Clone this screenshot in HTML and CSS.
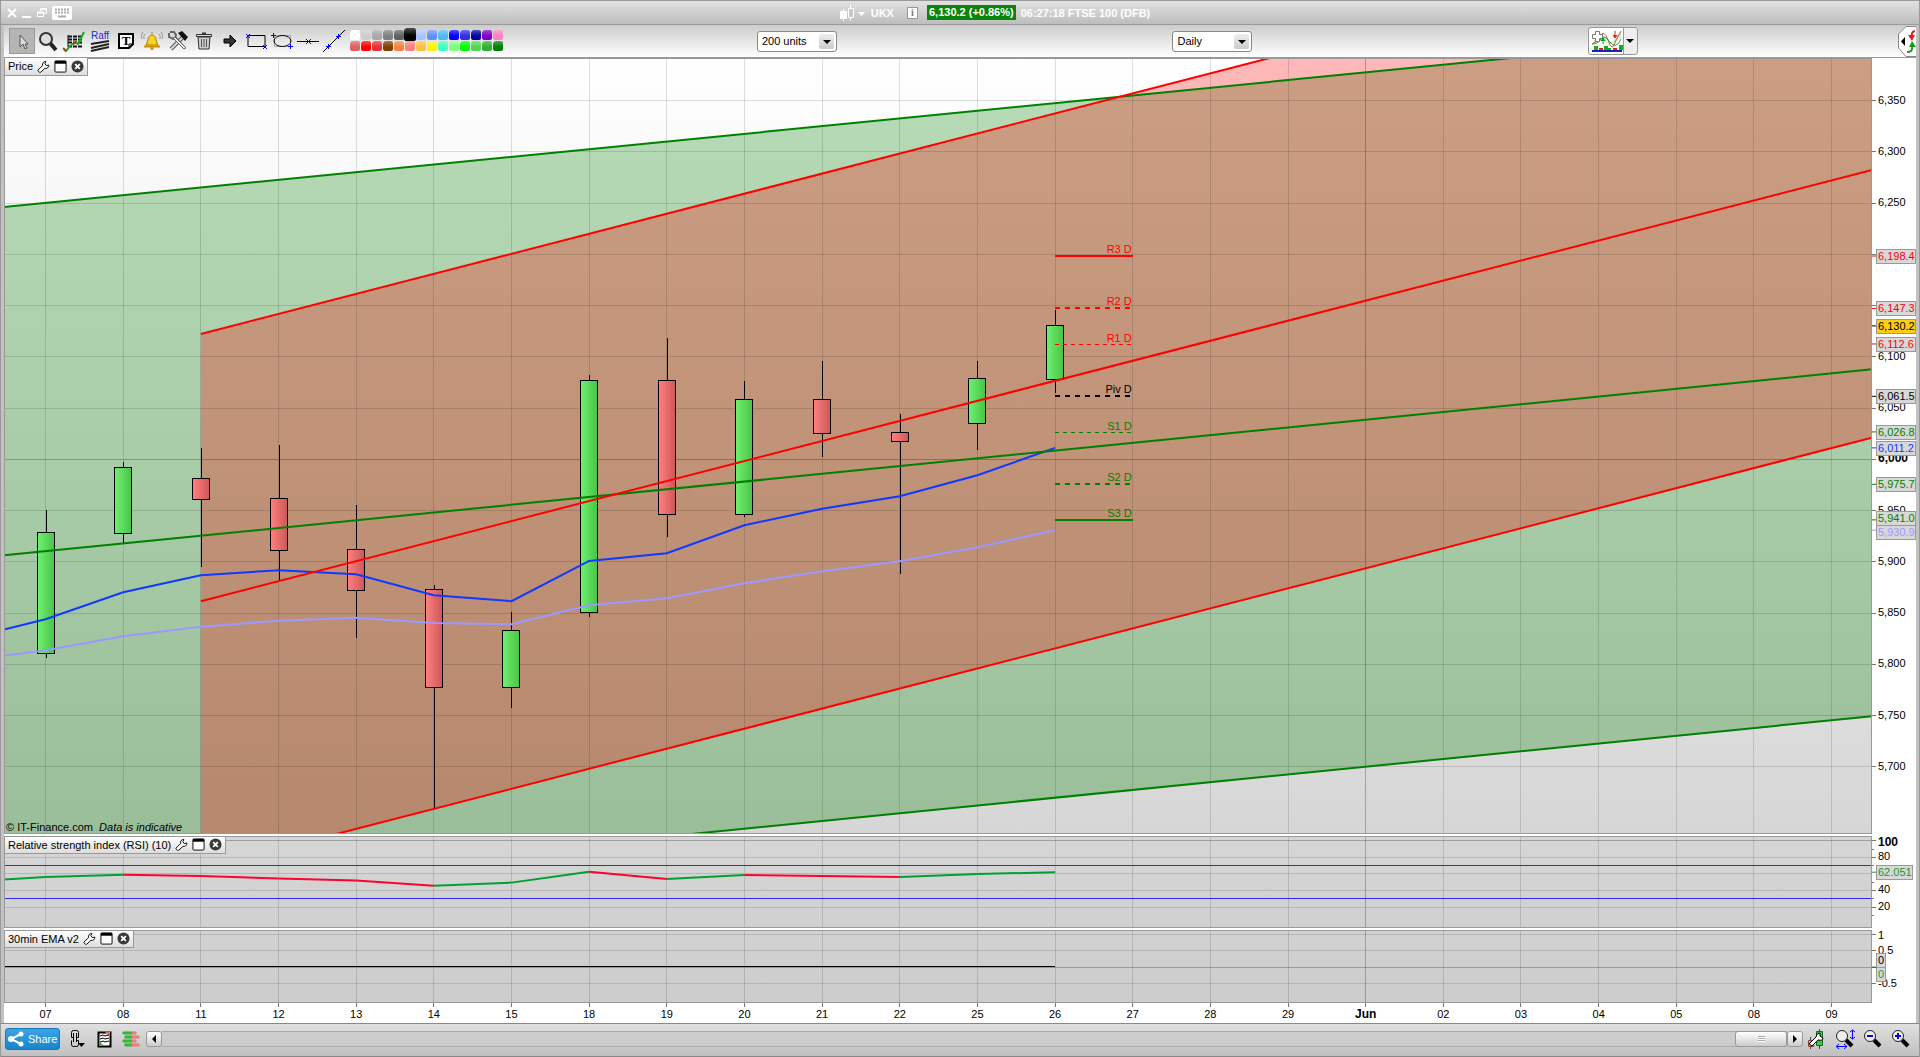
FILE: index.html
```
<!DOCTYPE html>
<html lang="en">
<head>
    <meta charset="UTF-8">
    <meta name="viewport" content="width=device-width, initial-scale=1.0">
    <title>UKX - FTSE 100 (DFB)</title>
    <link rel="stylesheet" href="styles.css">
</head>
<body>
    <svg class="defs" aria-hidden="true">
        <symbol id="wrench" viewBox="0 0 14 14">
            <path d="M1 11l5-5c-.5-2.500 1-4.500 3.500-4.500l-1 2.500 1.500 2 2.800-.5c0 2.500-2 4-4.300 3.500L4 13.200c-1.500.5-3-1-3-2.200z" fill="#fff" stroke="#000"/>
        </symbol>
        <symbol id="restore" viewBox="0 0 14 14">
            <rect x="1" y="1" width="12" height="12" rx="1" fill="#fff" stroke="#000"/>
            <path d="M1 1h12v3H1z"/>
        </symbol>
        <symbol id="close" viewBox="0 0 14 14">
            <circle cx="7" cy="7" r="6.500" fill="#3a3a3a"/>
            <path d="M4.500 4.500l5 5m0-5l-5 5" stroke="#fff" stroke-width="2"/>
        </symbol>
        <symbol id="lens" viewBox="0 0 20 20">
            <path d="M11 11l6 6" stroke="#000" stroke-width="4"/>
            <circle cx="7" cy="7" r="5.500" fill="#eee" stroke="#222"/>
        </symbol>
    </svg>

    <div class="window">
        <header class="titlebar">
            <div class="win-buttons">
                <button aria-label="Close"><svg width="10" height="10"><path d="M1 1l8 8m0-8L1 9" stroke="#fff" stroke-width="2"/></svg></button>
                <button aria-label="Minimise"><svg width="10" height="10"><path d="M0 9h9" stroke="#fff" stroke-width="2"/></svg></button>
                <button aria-label="Restore"><svg width="10" height="10"><path d="M3.500 3V1h6v4.500H7M.5 4.500h6v4h-6z" fill="none" stroke="#fff"/><path d="M3 1h7M0 4.500h7" stroke="#fff" stroke-width="2"/></svg></button>
                <button aria-label="Keyboard"><svg width="20" height="14"><rect width="20" height="14" rx="2" fill="#fff"/><path d="M3 3.500h14M3 6.500h14" stroke="#aaa" stroke-width="2" stroke-dasharray="2 1"/><path d="M6 10.500h8" stroke="#aaa" stroke-width="2"/></svg></button>
            </div>
            <div class="instrument">
                <svg width="26" height="16"><path d="M3.500 4v12M10.500 0v16" stroke="#fff"/><path d="M0 6h7v8H0z" fill="#fff"/><path d="M8.500 3.500h5v9h-5z" fill="#c8c8c8" stroke="#fff"/><path d="M18 7h7l-3.500 4z" fill="#fff"/></svg>
                <span>UKX</span>
                <button class="info" aria-label="Information">i</button>
                <span class="quote">6,130.2 (+0.86%)</span>
                <span>06:27:18 FTSE 100 (DFB)</span>
            </div>
        </header>

        <div class="toolbar">
            <div class="tools">
                <button class="active" aria-label="Pointer"><svg width="24" height="24"><path d="M10 6v12l3-3 2 5 2-1-2-4h3z" fill="#ddd" stroke="#555"/></svg></button>
                <button aria-label="Zoom"><svg width="24" height="24"><path d="M14 14l6 7" stroke="#222" stroke-width="4"/><circle cx="10" cy="10" r="6" fill="#ddd" stroke="#333" stroke-width="2"/></svg></button>
                <button aria-label="Indicators"><svg width="24" height="24"><path d="M6 7.500h14M6 10.500h14M6 13.500h14M6 17.500h14" stroke="#111" stroke-width="2" stroke-dasharray="4 1"/><path d="M6 6v12" stroke="#111"/><path d="M1 19l3 3 4-5 6-4 2 2 6-12" stroke="#12b020" stroke-width="2" fill="none"/><path d="M2 20l2 2M11 15l3-2" stroke="#e02020" stroke-width="2"/></svg></button>
                <button class="raff" aria-label="Raff channel"><span>Raff</span><svg width="20" height="12"><path d="M1 4l18-3M1 8l18-4M1 11l18-4" stroke="#222" stroke-width="2"/></svg></button>
                <button aria-label="Text"><svg width="24" height="24"><path d="M5 5h14v10l-4 4H5z" fill="#fff" stroke="#000" stroke-width="2"/><path d="M15 19v-4h4" fill="none" stroke="#000"/><text class="glyph" x="12" y="16">T</text></svg></button>
                <button aria-label="Alerts"><svg width="24" height="24"><path d="M12 3v2M6 16c2-2 1-9 6-10 5 1 4 8 6 10z" fill="#ffd21c" stroke="#a87800"/><path d="M4 17.500h16" stroke="#c89000" stroke-width="2"/><circle cx="12" cy="19.500" r="1.500" fill="#d09000"/><path d="M5 5q-2 2-1 5M3 3q-3 3-1 7M19 5q2 2 1 5M21 3q3 3 1 7" fill="none" stroke="#999"/></svg></button>
                <button aria-label="Settings"><svg width="24" height="24"><path d="M5 20L17 8" stroke="#555" stroke-width="4"/><path d="M5 20L17 8" stroke="#ddd" stroke-width="2"/><path d="M12 4l4-2 6 6-3 4z" fill="#111"/><path d="M3 4v4l4 2 3-1 9 10M4 3h4l2 3-1 4" fill="none" stroke="#666" stroke-width="2"/><path d="M7 9l11 11 2-1L9 8z" fill="#eee" stroke="#666"/></svg></button>
                <button aria-label="Delete"><svg width="24" height="24"><path d="M6 8h12l-1 12H7z" fill="#ccc" stroke="#333"/><path d="M9.500 10v8M12 10v8M14.500 10v8" stroke="#555"/><path d="M4.500 5.500h15v2h-15z" fill="#ddd" stroke="#333"/><path d="M10 4.500h4" stroke="#333" stroke-width="2"/></svg></button>
                <button aria-label="Arrow"><svg width="24" height="24"><path d="M6 10h6V6l6 6-6 6v-4H6z" fill="#333" stroke="#000"/></svg></button>
                <button aria-label="Rectangle"><svg width="24" height="24"><path d="M4 6.500h17v11H4z" fill="none" stroke="#000"/><path class="anchor" d="M2 5l4 4m0-4L2 9M19 16l4 4m0-4l-4 4"/></svg></button>
                <button aria-label="Ellipse"><svg width="24" height="24"><path d="M4.500 6.500h16v11h-16z" fill="none" stroke="#aaa"/><ellipse cx="12.500" cy="12" rx="8.500" ry="5.500" fill="none" stroke="#000"/><path class="anchor" d="M1 6.500h5M3.500 4v5M18 17.500h5M20.500 15v5"/></svg></button>
                <button aria-label="Horizontal line"><svg width="24" height="24"><path d="M1 12.500h22" stroke="#000"/><path class="anchor" d="M10 10l5 5m0-5l-5 5"/></svg></button>
                <button aria-label="Line"><svg width="24" height="24"><path d="M1 23L23 1" stroke="#000"/><path class="anchor" d="M4 17.500h5M6.500 15v5M14 7.500h5M16.500 5v5"/></svg></button>
                <div class="palette" id="palette"></div>
            </div>
            <div><label class="dropdown"><select aria-label="Units"><option>200 units</option></select></label></div>
            <div><label class="dropdown"><select aria-label="Timeframe"><option>Daily</option></select></label></div>
            <div class="toolbar-end">
                <button class="indicators" aria-label="Add indicator">
                    <svg width="32" height="22"><path d="M1 14l7-3 4-8 6 13 8-10 4-5v6l-6 6-10-2-5-7-4 3z" fill="#c8ecc8"/><path d="M1 14q4-1 8-8t8 4 6 5 7-14" fill="none" stroke="#e05050"/><path d="M1 14q6 0 9-5t9 3 11-3" fill="none" stroke="#30a030"/><path d="M4.500 1.500h4v3h3v4h-3v3h-4v-3h-3v-4h3z" fill="#fff" stroke="#777"/><path d="M24 1v4m-2 0l2 3 2-3" fill="#e02020" stroke="#e02020"/><path d="M12 14v-4m-2 1l2-3 2 3" fill="#10a010" stroke="#10a010"/><path d="M3 16h4v4H3zM13 16h4v4h-4zM17 18h3v2h-3zM28 15h4v5h-4z" fill="#10b010"/><path d="M8 18h4v2H8zM22 18h4v2h-4z" fill="#e02020"/><path d="M1 21h30" stroke="#2020c0" stroke-width="2"/></svg>
                    <span class="caret"></span>
                </button>
                <button class="side-tab" aria-label="Open panel"><svg width="18" height="31"><path d="M18 .5H8L.5 8v14L8 30.500h10" fill="#fff" stroke="#888"/><path d="M7 11v9l-4-4.500z"/><path d="M17 5q-4 1-3 5" stroke="#e02020" stroke-width="2" fill="none"/><path d="M10 9h7l-3 6z" fill="#e02020"/><path d="M9 26q6 0 5-5" stroke="#10a010" stroke-width="2" fill="none"/><path d="M11 21h7l-4-6z" fill="#10a010"/></svg></button>
            </div>
        </div>

        <main class="charts">
            <section class="panel price">
                <svg class="plot" id="price"></svg>
                <div class="panel-title">Price
                    <button aria-label="Configure"><svg><use href="#wrench"/></svg></button>
                    <button aria-label="Expand"><svg><use href="#restore"/></svg></button>
                    <button aria-label="Close"><svg><use href="#close"/></svg></button>
                </div>
                <div class="credit">© IT-Finance.com&nbsp; <em>Data is indicative</em></div>
            </section>
            <section class="panel rsi">
                <svg class="plot" id="rsi"></svg>
                <div class="panel-title">Relative strength index (RSI) (10)
                    <button aria-label="Configure"><svg><use href="#wrench"/></svg></button>
                    <button aria-label="Expand"><svg><use href="#restore"/></svg></button>
                    <button aria-label="Close"><svg><use href="#close"/></svg></button>
                </div>
            </section>
            <section class="panel ema">
                <svg class="plot" id="ema"></svg>
                <div class="panel-title">30min EMA v2
                    <button aria-label="Configure"><svg><use href="#wrench"/></svg></button>
                    <button aria-label="Expand"><svg><use href="#restore"/></svg></button>
                    <button aria-label="Close"><svg><use href="#close"/></svg></button>
                </div>
            </section>
            <svg class="dates" id="dates"></svg>
        </main>

        <footer class="bottombar">
            <button class="share"><svg width="16" height="16"><path d="M13 3L3 8l10 5" fill="none" stroke="#fff" stroke-width="2"/><circle cx="13" cy="3" r="2.500" fill="#fff"/><circle cx="3" cy="8" r="3" fill="#fff"/><circle cx="13" cy="13" r="2.500" fill="#fff"/></svg>Share</button>
            <div class="bottom-tools">
                <button aria-label="Link"><svg width="18" height="20"><path d="M5.500 8.500h-2v-5q0-2 2-2h3q2 0 2 2v5h-2M3.500 11.500v4q0 2 2 2h3q2 0 2-2v-4h-2M5.500 4v9M8.500 4v9" fill="none" stroke="#000"/><path d="M10 14h7l-3.500 4z"/></svg></button>
                <button aria-label="Orders"><svg width="18" height="20"><path d="M3.500 3.500h12v14h-12z" fill="#fff" stroke="#000" stroke-width="2"/><path d="M10 3h5v5z" fill="#e66"/><path d="M4 12v5h5z" fill="#3b3"/><path d="M5 7l3-1 2 1 4-1M5 10l3-1 2 1 4-1M5 13l3-1 2 1 4-1" fill="none" stroke="#000"/></svg></button>
                <button aria-label="Depth"><svg width="18" height="20"><path d="M1 3h9v2H1zM3 7h7v2H3zM1 11h9v2H1zM3 15h7v2H3z" fill="#3c3" stroke="#3a3"/><path d="M10 3h4v2h-4zM10 7h7v2h-7zM10 11h4v2h-4zM10 15h7v2h-7z" fill="#f88" stroke="#d77"/></svg></button>
            </div>
            <div class="scroller">
                <button class="step" aria-label="Scroll left"><svg width="6" height="8"><path d="M5 0v8L1 4z"/></svg></button>
                <div class="track"><div class="thumb"><span></span></div></div>
                <button class="step" aria-label="Scroll right"><svg width="6" height="8"><path d="M1 0v8l4-4z"/></svg></button>
            </div>
            <div class="zoom-tools">
                <button aria-label="Chart settings"><svg width="20" height="20"><path d="M3.500 8v12M12.500 0v20" stroke="#444"/><path d="M1.500 11.500h5v6h-5z" fill="#e99" stroke="#844"/><path d="M9.500 2.500h6v14h-6z" fill="#3c4" stroke="#262"/><path d="M2 15l7-7q0-4 4-4v3l3 2q0 3-5 2l-6 6z" fill="#fff" stroke="#000"/></svg></button>
                <button aria-label="Fit"><svg width="20" height="20"><use href="#lens" width="20" height="20"/><path d="M2 17.500h9M4 15l-3 2.500L4 20M9 15l3 2.500L9 20M17.500 1v9M15 3l2.500-2L20 3M15 8l2.500 2L20 8" fill="none" stroke="#00f"/></svg></button>
                <button aria-label="Zoom out"><svg width="20" height="20"><use href="#lens" width="20" height="20"/><path d="M4 7h6" stroke="#00f" stroke-width="2"/></svg></button>
                <button aria-label="Zoom in"><svg width="20" height="20"><use href="#lens" width="20" height="20"/><path d="M4 7h6M7 4v6" stroke="#00f" stroke-width="2"/></svg></button>
            </div>
        </footer>
    </div>

    <script src="chart.js"></script>
</body>
</html>
```
FILE: styles.css
```
* {
    box-sizing: border-box;
}

body {
    margin: 0;
    font-family: "Liberation Sans", Arial, sans-serif;
    font-size: 11px;
    color: #000;
}

button {
    padding: 0;
    border: none;
    background: none;
    font: inherit;
    cursor: pointer;
}

button svg {
    display: block;
}

.defs {
    position: absolute;
    width: 0;
    height: 0;
}

.window {
    display: flex;
    flex-direction: column;
    height: 100vh;
    min-height: 480px;
    padding: 0 3px;
    border: solid #999;
    border-width: 0 1px;
    background: #c2c2c2;
    overflow: hidden;
}

/* Title bar */
.titlebar {
    display: flex;
    align-items: center;
    height: 25px;
    margin: 0 -3px;
    border-top: 1px solid #999;
    border-bottom: 1px solid #999;
    background: linear-gradient(#e2e2e2, #bdbdbd);
    color: #fff;
    font-weight: bold;
}

.win-buttons {
    display: flex;
    align-items: center;
    gap: 5px;
    flex: 1;
    padding-left: 6px;
}

.instrument {
    display: flex;
    align-items: center;
    gap: 5px;
    margin-left: 64px;
}

.titlebar::after {
    content: "";
    flex: 1;
}

.info {
    width: 11px;
    height: 12px;
    margin: 0 4px 0 8px;
    border: 1px solid #999;
    background: #fff;
    color: #777;
    font: bold 10px/10px "Liberation Serif", serif;
}

.quote {
    padding: 0 2px;
    background: #0a850a;
    line-height: 15px;
    white-space: nowrap;
}

/* Toolbar */
.toolbar {
    display: grid;
    grid-template-columns: 9fr 5fr 5fr 328px;
    align-items: center;
    height: 33px;
    padding-left: 5px;
    border-bottom: 1px solid #999;
    background: linear-gradient(#ccc, #fff);
}

.tools {
    display: flex;
    align-items: center;
}

.tools button {
    flex: none;
    width: 26px;
    height: 26px;
}

.tools button svg {
    margin: auto;
}

.tools .active {
    border: 1px solid #999;
    background: #b5b5b5;
}

.raff {
    color: #1030e0;
    font-size: 10px;
    line-height: 9px;
}

.raff span {
    display: block;
}

.glyph {
    font: bold 13px "Liberation Serif", serif;
    text-anchor: middle;
}

.anchor {
    fill: none;
    stroke: #00f;
}

.palette {
    display: grid;
    grid-template-columns: repeat(14, 11px);
    margin-left: 3px;
}

.palette i {
    height: 11px;
    border: solid transparent;
    border-width: 0 1px 1px 0;
    border-radius: 3px;
    background: linear-gradient(rgba(255, 255, 255, .3), rgba(255, 255, 255, 0) 60%) padding-box, var(--swatch) padding-box;
}

.palette .picked {
    margin: -2px -1px -1px;
    height: 14px;
    z-index: 1;
}

.dropdown {
    position: relative;
    display: inline-block;
}

.dropdown select {
    width: 80px;
    height: 21px;
    padding: 0 4px;
    appearance: none;
    border: 1px solid #888;
    border-radius: 3px;
    background: #fff;
    color: #000;
    font: 11px "Liberation Sans", Arial, sans-serif;
}

.dropdown::before {
    content: "";
    position: absolute;
    top: 3px;
    right: 3px;
    width: 15px;
    height: 15px;
    border-radius: 2px;
    background: linear-gradient(#eee, #ccc);
    pointer-events: none;
}

.dropdown::after,
.caret {
    border: 4px solid transparent;
    border-top: 4px solid #000;
    border-bottom: none;
}

.dropdown::after {
    content: "";
    position: absolute;
    top: 9px;
    right: 6px;
    pointer-events: none;
}

.toolbar-end {
    display: flex;
    justify-content: space-between;
    align-items: center;
}

.indicators {
    display: flex;
    align-items: center;
    width: 50px;
    height: 28px;
    padding-left: 2px;
    border: 1px solid #999;
    border-radius: 3px;
    background: linear-gradient(90deg, #fff 34px, #999 34px, #999 35px, #eee 35px);
}

.caret {
    margin-left: 3px;
}

/* Chart panels */
.charts {
    flex: 1;
    min-height: 0;
    display: flex;
    flex-direction: column;
    gap: 2px;
    background: #fff;
}

.panel {
    position: relative;
    flex: none;
}

.price {
    flex: 1;
    min-height: 0;
}

.rsi {
    height: 92px;
}

.ema {
    height: 73px;
}

.plot {
    position: absolute;
    width: 100%;
    height: 100%;
}

.panel-title {
    position: absolute;
    top: 0;
    left: 0;
    display: flex;
    align-items: center;
    gap: 4px;
    height: 18px;
    padding: 0 3px 1px;
    border: 1px solid #999;
    background: linear-gradient(#fff, #ddd);
}

.price .panel-title {
    border-top: none;
}

.panel-title svg {
    width: 13px;
    height: 13px;
}

.credit {
    position: absolute;
    left: 2px;
    bottom: 1px;
}

.dates {
    flex: none;
    width: 100%;
    height: 20px;
    margin-top: -2px;
}

.frame {
    fill: none;
    stroke: #999;
}

.grid line {
    stroke: rgba(0, 0, 0, .13);
}

.grid .major {
    stroke: rgba(0, 0, 0, .26);
}

.frame,
.grid,
.ticks,
.wick,
.body,
.flat {
    shape-rendering: crispEdges;
}

.ticks line {
    stroke: #777;
}

.plot text,
.dates text {
    font-size: 11px;
}

.dates text {
    text-anchor: middle;
}

.plot .strong,
.dates .strong {
    font-size: 12px;
    font-weight: bold;
}

.wick,
.body {
    stroke: #000;
}

.trend {
    fill: none;
    stroke-width: 2;
}

.tag {
    stroke: #999;
}

/* Bottom bar */
.bottombar {
    display: flex;
    align-items: center;
    height: 34px;
    margin: 0 -3px;
    padding: 0 8px 2px 4px;
    border-top: 1px solid #888;
    border-bottom: 1px solid #888;
    background: linear-gradient(#e0e0e0, #c0c0c0);
}

.share {
    display: flex;
    align-items: center;
    gap: 4px;
    height: 22px;
    padding: 0 2px;
    border: 1px solid #1878c0;
    border-radius: 3px;
    background: linear-gradient(#3aa4e4, #1a84cc);
    color: #fff;
}

.bottom-tools {
    display: flex;
    gap: 9px;
    margin: 0 6px 0 8px;
}

.scroller {
    display: flex;
    flex: 1;
    height: 16px;
}

.step,
.thumb {
    display: flex;
    align-items: center;
    justify-content: center;
    border: 1px solid #999;
    border-radius: 3px;
    background: linear-gradient(#fff, #ccc);
}

.step {
    width: 16px;
}

.track {
    flex: 1;
    display: flex;
    justify-content: flex-end;
    border: solid #aaa;
    border-width: 1px 0;
    background: #ccc;
}

.thumb {
    width: 52px;
    margin: -1px 0;
}

.thumb span {
    width: 7px;
    height: 6px;
    background: repeating-linear-gradient(#aaa 0 1px, #fff 1px 2px);
}

.zoom-tools {
    display: flex;
    gap: 8px;
    margin-left: 4px;
}
```
FILE: chart.js
```
const AXIS = 44;
const DAYS = ['07', '08', '11', '12', '13', '14', '15', '18', '19', '20', '21', '22', '25', '26',
    '27', '28', '29', 'Jun', '02', '03', '04', '05', '08', '09'];
const START = -0.535;
const END = 23.52;

// open/close top, open/close bottom, high, low, rising
const candles = [
    [5927.9, 5809.9, 5950.6, 5806.2, 1],
    [5991.3, 5927.5, 5997.5, 5918.1, 1],
    [5980.6, 5960.7, 6011.1, 5895.0, 0],
    [5961.1, 5910.9, 6014.0, 5881.7, 0],
    [5911.3, 5871.9, 5955.5, 5825.8, 0],
    [5872.3, 5776.7, 5877.5, 5660.2, 0],
    [5832.3, 5776.7, 5851.1, 5757.8, 1],
    [6076.2, 5850.4, 6082.3, 5846.2, 1],
    [6076.2, 5946.0, 6118.4, 5924.3, 0],
    [6057.7, 5946.0, 6076.5, 5943.8, 1],
    [6057.7, 6025.1, 6096.0, 6002.3, 0],
    [6025.5, 6017.3, 6044.3, 5888.2, 0],
    [6078.1, 6034.8, 6096.0, 6009.2, 1],
    [6129.8, 6077.8, 6145.8, 6065.1, 1]
];
const fast = [5833.9, 5844, 5870.3, 5886.9, 5891.8, 5887.9, 5867.4, 5861.6, 5900.9, 5908.4, 5935.7, 5951.9, 5964, 5984.5, 6011.2];
const slow = [5808.5, 5813.8, 5827.4, 5836.8, 5842.6, 5845.6, 5840.4, 5839.1, 5857.7, 5864.5, 5879.1, 5890.8, 5900.6, 5914.2, 5930.9];
const rsiValues = [53.2, 56.2, 58.9, 57.4, 54.4, 52, 45.6, 49.5, 62.5, 54, 58.6, 57.4, 56.2, 59.8, 62.05];

// name, price, colour, width, dash
const pivots = [
    ['R3 D', 6198.4, '#f00', 2, ''],
    ['R2 D', 6147.3, '#f00', 2, '5 5'],
    ['R1 D', 6112.6, '#f00', 1, '4 4'],
    ['Piv D', 6061.5, '#000', 2, '5 5'],
    ['S1 D', 6026.8, '#008000', 1, '4 4'],
    ['S2 D', 5975.7, '#008000', 2, '5 5'],
    ['S3 D', 5941.0, '#008000', 2, '']
];

// start index, then [start, end] price for the top, middle and bottom lines
const channels = [
    { from: START, colour: '#008000', lines: [[6246.2, 6426.4], [5906.4, 6087.9], [5567.6, 5749.4]] },
    { from: 2, colour: '#f00', lines: [[6122.3, 6543.3], [5861.6, 6282.3], [5600.4, 6021.2]] }
];

function setup(id, top, bottom) {
    const svg = document.getElementById(id);
    const w = svg.clientWidth - AXIS;
    const h = svg.clientHeight;
    return {
        svg, w, h,
        x: i => (i - START) * w / (END - START),
        y: v => (top - v) / (top - bottom) * h
    };
}

function background(c, from, to) {
    return `<defs><linearGradient id="bg-${c.svg.id}" x2="0" y2="1"><stop stop-color="${from}"/><stop offset="1" stop-color="${to}"/></linearGradient>
        <clipPath id="clip-${c.svg.id}"><rect width="${c.w}" height="${c.h}"/></clipPath></defs>
        <rect width="${c.w}" height="${c.h}" fill="url(#bg-${c.svg.id})"/>`;
}

function grid(c, values, major) {
    let out = '<g class="grid">';
    DAYS.forEach((day, i) => {
        out += `<line class="${day === 'Jun' ? 'major' : ''}" x1="${c.x(i)}" x2="${c.x(i)}" y2="${c.h}"/>`;
    });
    values.forEach(v => {
        out += `<line class="${v === major ? 'major' : ''}" x2="${c.w}" y1="${c.y(v)}" y2="${c.y(v)}"/>`;
    });
    return out + '</g>';
}

function axis(c, values, major, format) {
    let out = `<rect class="frame" x=".5" y=".5" width="${c.w - 1}" height="${c.h - 1}"/><g class="ticks">`;
    values.forEach(v => {
        const y = c.y(v);
        // keep the topmost label inside the panel
        const base = Math.max(y + 3, v === major ? 10 : 9);
        out += `<line x1="${c.w}" x2="${c.w + 4}" y1="${y}" y2="${y}"/>`;
        out += `<text class="${v === major ? 'strong' : ''}" x="${c.w + 6}" y="${base}">${format(v)}</text>`;
    });
    return out + '</g>';
}

// tags are listed from the highest value down
function tags(c, list) {
    const pos = list.map(t => c.y(t.value));
    for (let i = 1; i < pos.length; i++) {
        const overlap = 14 - (pos[i] - pos[i - 1]);
        if (overlap > 0) {
            pos[i - 1] -= overlap / 2;
            pos[i] += overlap / 2;
        }
    }
    return list.map((t, i) => {
        const y = Math.round(pos[i]);
        const width = t.text.length > 6 ? 38 : t.text.length > 1 ? 35 : 8;
        return `<path d="M${c.w} ${c.y(t.value)}h5" stroke="${t.colour}"/>
            <rect class="tag flat" x="${c.w + 4.5}" y="${y - 6.5}" width="${width + 1}" height="14" fill="${t.fill || '#d8d8d8'}"/>
            <text x="${c.w + 6}" y="${y + 4}" fill="${t.colour}">${t.text}</text>`;
    }).join('');
}

function polyline(c, values, colour) {
    const points = values.map((v, i) => `${c.x(i ? i - 1 : START)},${c.y(v)}`).join(' ');
    return `<polyline class="trend" points="${points}" stroke="${colour}"/>`;
}

function range(from, to, step) {
    const out = [];
    for (let v = from; v >= to; v -= step) out.push(v);
    return out;
}

function drawPrice() {
    const c = setup('price', 6391.6, 5634.5);
    const levels = range(6350, 5700, 50);
    let out = background(c, '#fff', '#d6d6d6');
    out += `<defs><linearGradient id="up"><stop stop-color="#70f070"/><stop offset="1" stop-color="#48c448"/></linearGradient>
        <linearGradient id="down"><stop stop-color="#ff8080"/><stop offset="1" stop-color="#cc5858"/></linearGradient></defs>`;
    out += '<g clip-path="url(#clip-price)">';
    channels.forEach(ch => {
        const [top, , bottom] = ch.lines;
        const a = c.x(ch.from), b = c.x(END);
        out += `<polygon points="${a},${c.y(top[0])} ${b},${c.y(top[1])} ${b},${c.y(bottom[1])} ${a},${c.y(bottom[0])}" fill="${ch.colour}" fill-opacity=".28"/>`;
    });
    out += grid(c, levels, 6000);
    candles.forEach(([top, bottom, high, low, rising], i) => {
        const x = Math.round(c.x(i));
        const y1 = Math.round(c.y(top)), y2 = Math.round(c.y(bottom));
        out += `<line class="wick" x1="${x + .5}" x2="${x + .5}" y1="${c.y(high)}" y2="${c.y(low)}"/>`;
        out += `<rect class="body" x="${x - 8.5}" y="${y1 - .5}" width="17" height="${y2 - y1}" fill="url(#${rising ? 'up' : 'down'})"/>`;
    });
    out += polyline(c, slow, '#9c98ff') + polyline(c, fast, '#1038ff');
    channels.forEach(ch => ch.lines.forEach(([v1, v2]) => {
        out += `<line class="trend" x1="${c.x(ch.from)}" y1="${c.y(v1)}" x2="${c.x(END)}" y2="${c.y(v2)}" stroke="${ch.colour}"/>`;
    }));
    pivots.forEach(([name, price, colour, width, dash]) => {
        const y = Math.round(c.y(price)) + (width === 1 ? .5 : 0);
        out += `<line class="flat" x1="${c.x(13)}" x2="${c.x(14)}" y1="${y}" y2="${y}" stroke="${colour}" stroke-width="${width}" stroke-dasharray="${dash}"/>`;
        out += `<text x="${c.x(14) - 1}" y="${y - 3}" text-anchor="end" fill="${colour}">${name}</text>`;
    });
    out += '</g>' + axis(c, levels, 6000, v => v.toLocaleString('en-US'));
    const marks = pivots.map(p => ({ value: p[1], colour: p[2] }));
    marks.push({ value: 6130.2, colour: '#000', fill: '#fc1' }, { value: 6011.2, colour: '#1038ff' }, { value: 5930.9, colour: '#9c98ff' });
    marks.sort((a, b) => b.value - a.value);
    marks.forEach(m => m.text = m.value.toLocaleString('en-US', { minimumFractionDigits: 1 }));
    c.svg.innerHTML = out + tags(c, marks);
}

function drawRsi() {
    const c = setup('rsi', 105.8, -5.3);
    let out = background(c, '#d6d6d6', '#d0d0d0') + grid(c, [100, 80, 60, 40, 20], 100);
    [70, 30].forEach(v => {
        out += `<line class="flat" x2="${c.w}" y1="${c.y(v)}" y2="${c.y(v)}" stroke="#2c2ce0"/>`;
    });
    for (let i = 1; i < rsiValues.length; i++) {
        const colour = rsiValues[i] > rsiValues[i - 1] ? '#00a030' : '#ff0030';
        out += `<line class="trend" x1="${c.x(i > 1 ? i - 2 : START)}" y1="${c.y(rsiValues[i - 1])}" x2="${c.x(i - 1)}" y2="${c.y(rsiValues[i])}" stroke="${colour}"/>`;
    }
    out += '<g class="ticks">';
    [90, 70, 50, 30, 10].forEach(v => {
        out += `<line x1="${c.w}" x2="${c.w + 2}" y1="${c.y(v)}" y2="${c.y(v)}"/>`;
    });
    out += '</g>' + axis(c, [100, 80, 40, 20], 100, String);
    c.svg.innerHTML = out + tags(c, [{ value: 62.051, text: '62.051', colour: '#159a30' }]);
}

function drawEma() {
    const c = setup('ema', 1.13, -1.08);
    let out = background(c, '#d2d2d2', '#ccc') + grid(c, [1, .5, 0, -.5], 0);
    out += `<line class="flat" x2="${c.x(13)}" y1="${c.y(0) - 1}" y2="${c.y(0) - 1}" stroke="#000"/>`;
    out += axis(c, [1, .5, -.5], null, String);
    c.svg.innerHTML = out + tags(c, [
        { value: 0, text: '0', colour: '#000' },
        { value: 0, text: '0', colour: '#159a30' }
    ]);
}

function drawDates() {
    const c = setup('dates', 1, 0);
    c.svg.innerHTML = '<g class="ticks">' + DAYS.map((day, i) =>
        `<line x1="${c.x(i)}" x2="${c.x(i)}" y2="4"/><text class="${day === 'Jun' ? 'strong' : ''}" x="${c.x(i)}" y="15">${day}</text>`
    ).join('') + '</g>';
}

function draw() {
    drawPrice();
    drawRsi();
    drawEma();
    drawDates();
}

const swatches = [
    '#fff', '#ccc', '#a8a8a8', '#808080', '#606060', '#000', '#a8c4ff', '#6090ff', '#50b8f4', '#0000ff', '#3030d8', '#0000a0', '#8000c0', '#ff80c0',
    '#e06060', '#f00', '#e83030', '#804000', '#ff8040', '#ff8080', '#ffc040', '#fff010', '#40ffc0', '#80ff80', '#0f0', '#50d850', '#30b030', '#008000'
];
document.getElementById('palette').innerHTML = swatches.map(s =>
    `<i class="${s === '#000' ? 'picked' : ''}" style="--swatch: linear-gradient(${s}, ${s})"></i>`
).join('');

draw();
window.addEventListener('resize', draw);
```
